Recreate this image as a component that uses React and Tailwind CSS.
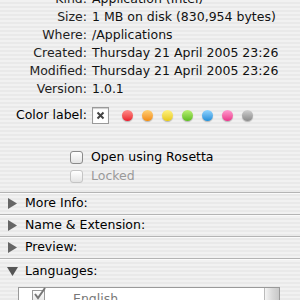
const stripes =
  "bg-[repeating-linear-gradient(to_bottom,#f1f1f1_0px,#f1f1f1_2px,#e9e9e9_2px,#e9e9e9_4px)]";

const infoRows = [
  ["Kind:", "Application (Intel)"],
  ["Size:", "1 MB on disk (830,954 bytes)"],
  ["Where:", "/Applications"],
  ["Created:", "Thursday 21 April 2005 23:26"],
  ["Modified:", "Thursday 21 April 2005 23:26"],
  ["Version:", "1.0.1"],
];

const dots = [
  "from-[#ff8a8a] to-[#e8102a]",
  "from-[#ffd070] to-[#f08a00]",
  "from-[#fff27a] to-[#e6c800]",
  "from-[#b8f070] to-[#5cbc1a]",
  "from-[#8fd4ff] to-[#1a8ed8]",
  "from-[#ff9ad0] to-[#e8308a]",
  "from-[#d0d0d0] to-[#8a8a8a]",
];

function Checkbox({ disabled }) {
  return (
    <div
      className={`h-[13px] w-[13px] rounded-[3px] border bg-gradient-to-b from-white to-[#e4e4e4] ${
        disabled ? "border-[#c4c4c4]" : "border-[#8a8a8a]"
      }`}
    />
  );
}

function Triangle({ open }) {
  return (
    <svg width="11" height="11" viewBox="0 0 11 11" className="shrink-0">
      {open ? (
        <polygon points="0,1 11,1 5.5,10" fill="#555" />
      ) : (
        <polygon points="1,0 10,5.5 1,11" fill="#666" />
      )}
    </svg>
  );
}

function Section({ label }) {
  return (
    <div className="flex h-[22px] items-center gap-[7px] border-b border-[#b4b4b4] pl-[7px] shadow-[0_1px_0_#fafafa]">
      <Triangle />
      <span className="text-[12.5px] text-black">{label}</span>
    </div>
  );
}

export default function App() {
  return (
    <div
      className={`h-[300px] w-[300px] overflow-hidden ${stripes} font-['DejaVu_Sans',sans-serif] text-black`}
    >
      <div className="mt-[-10px]">
        {infoRows.map(([label, value]) => (
          <div key={label} className="flex h-[18px] items-center text-[12.5px]">
            <span className="w-[87px] text-right text-[#222]">{label}</span>
            <span className="ml-[5px] text-[#111]">{value}</span>
          </div>
        ))}
      </div>

      <div className="mt-[7px] flex h-[20px] items-center text-[12.5px]">
        <span className="w-[87px] text-right">Color label:</span>
        <div className="ml-[5px] flex h-[17px] w-[17px] items-center justify-center border border-[#9a9a9a] bg-white shadow-[inset_0_1px_1px_#ccc]">
          <svg width="9" height="9" viewBox="0 0 9 9">
            <path d="M1.5 1.5 L7.5 7.5 M7.5 1.5 L1.5 7.5" stroke="#444" strokeWidth="2" />
          </svg>
        </div>
        <div className="ml-[13px] flex gap-[9px]">
          {dots.map((d, i) => (
            <div
              key={i}
              className={`h-[11px] w-[11px] rounded-full bg-gradient-to-b ${d} shadow-[0_1px_1px_rgba(0,0,0,0.25)]`}
            />
          ))}
        </div>
      </div>

      <div className="mt-[23px] flex h-[19px] items-center gap-[8px] pl-[70px] text-[12.5px]">
        <Checkbox />
        <span>Open using Rosetta</span>
      </div>
      <div className="flex h-[19px] items-center gap-[8px] pl-[70px] text-[12.5px]">
        <Checkbox disabled />
        <span className="text-[#9a9a9a]">Locked</span>
      </div>

      <div className="mt-[6px] border-b border-[#b4b4b4] shadow-[0_1px_0_#fafafa]" />
      <Section label="More Info:" />
      <Section label="Name & Extension:" />
      <Section label="Preview:" />
      <div className="flex h-[24px] items-center gap-[7px] pl-[7px]">
        <Triangle open />
        <span className="text-[12.5px]">Languages:</span>
      </div>

      <div className="ml-[18px] mt-[4px] flex h-[30px] w-[262px] border border-[#9a9a9a] bg-white">
        <div className="flex flex-1 items-start gap-[28px] pl-[13px] pt-[2px]">
          <div className="relative h-[13px] w-[13px] border border-[#9a9a9a] bg-gradient-to-b from-white to-[#e4e4e4]">
            <svg width="14" height="14" viewBox="0 0 14 14" className="absolute left-[0px] top-[-4px]">
              <path d="M2 7 L5 11 L12 1" stroke="#777" strokeWidth="2" fill="none" />
            </svg>
          </div>
          <span className="text-[12.5px] text-[#777]">English</span>
        </div>
        <div className="w-[15px] border-l border-[#bbb] bg-gradient-to-r from-[#f4f4f4] via-[#dadada] to-[#c8c8c8]" />
      </div>
    </div>
  );
}
